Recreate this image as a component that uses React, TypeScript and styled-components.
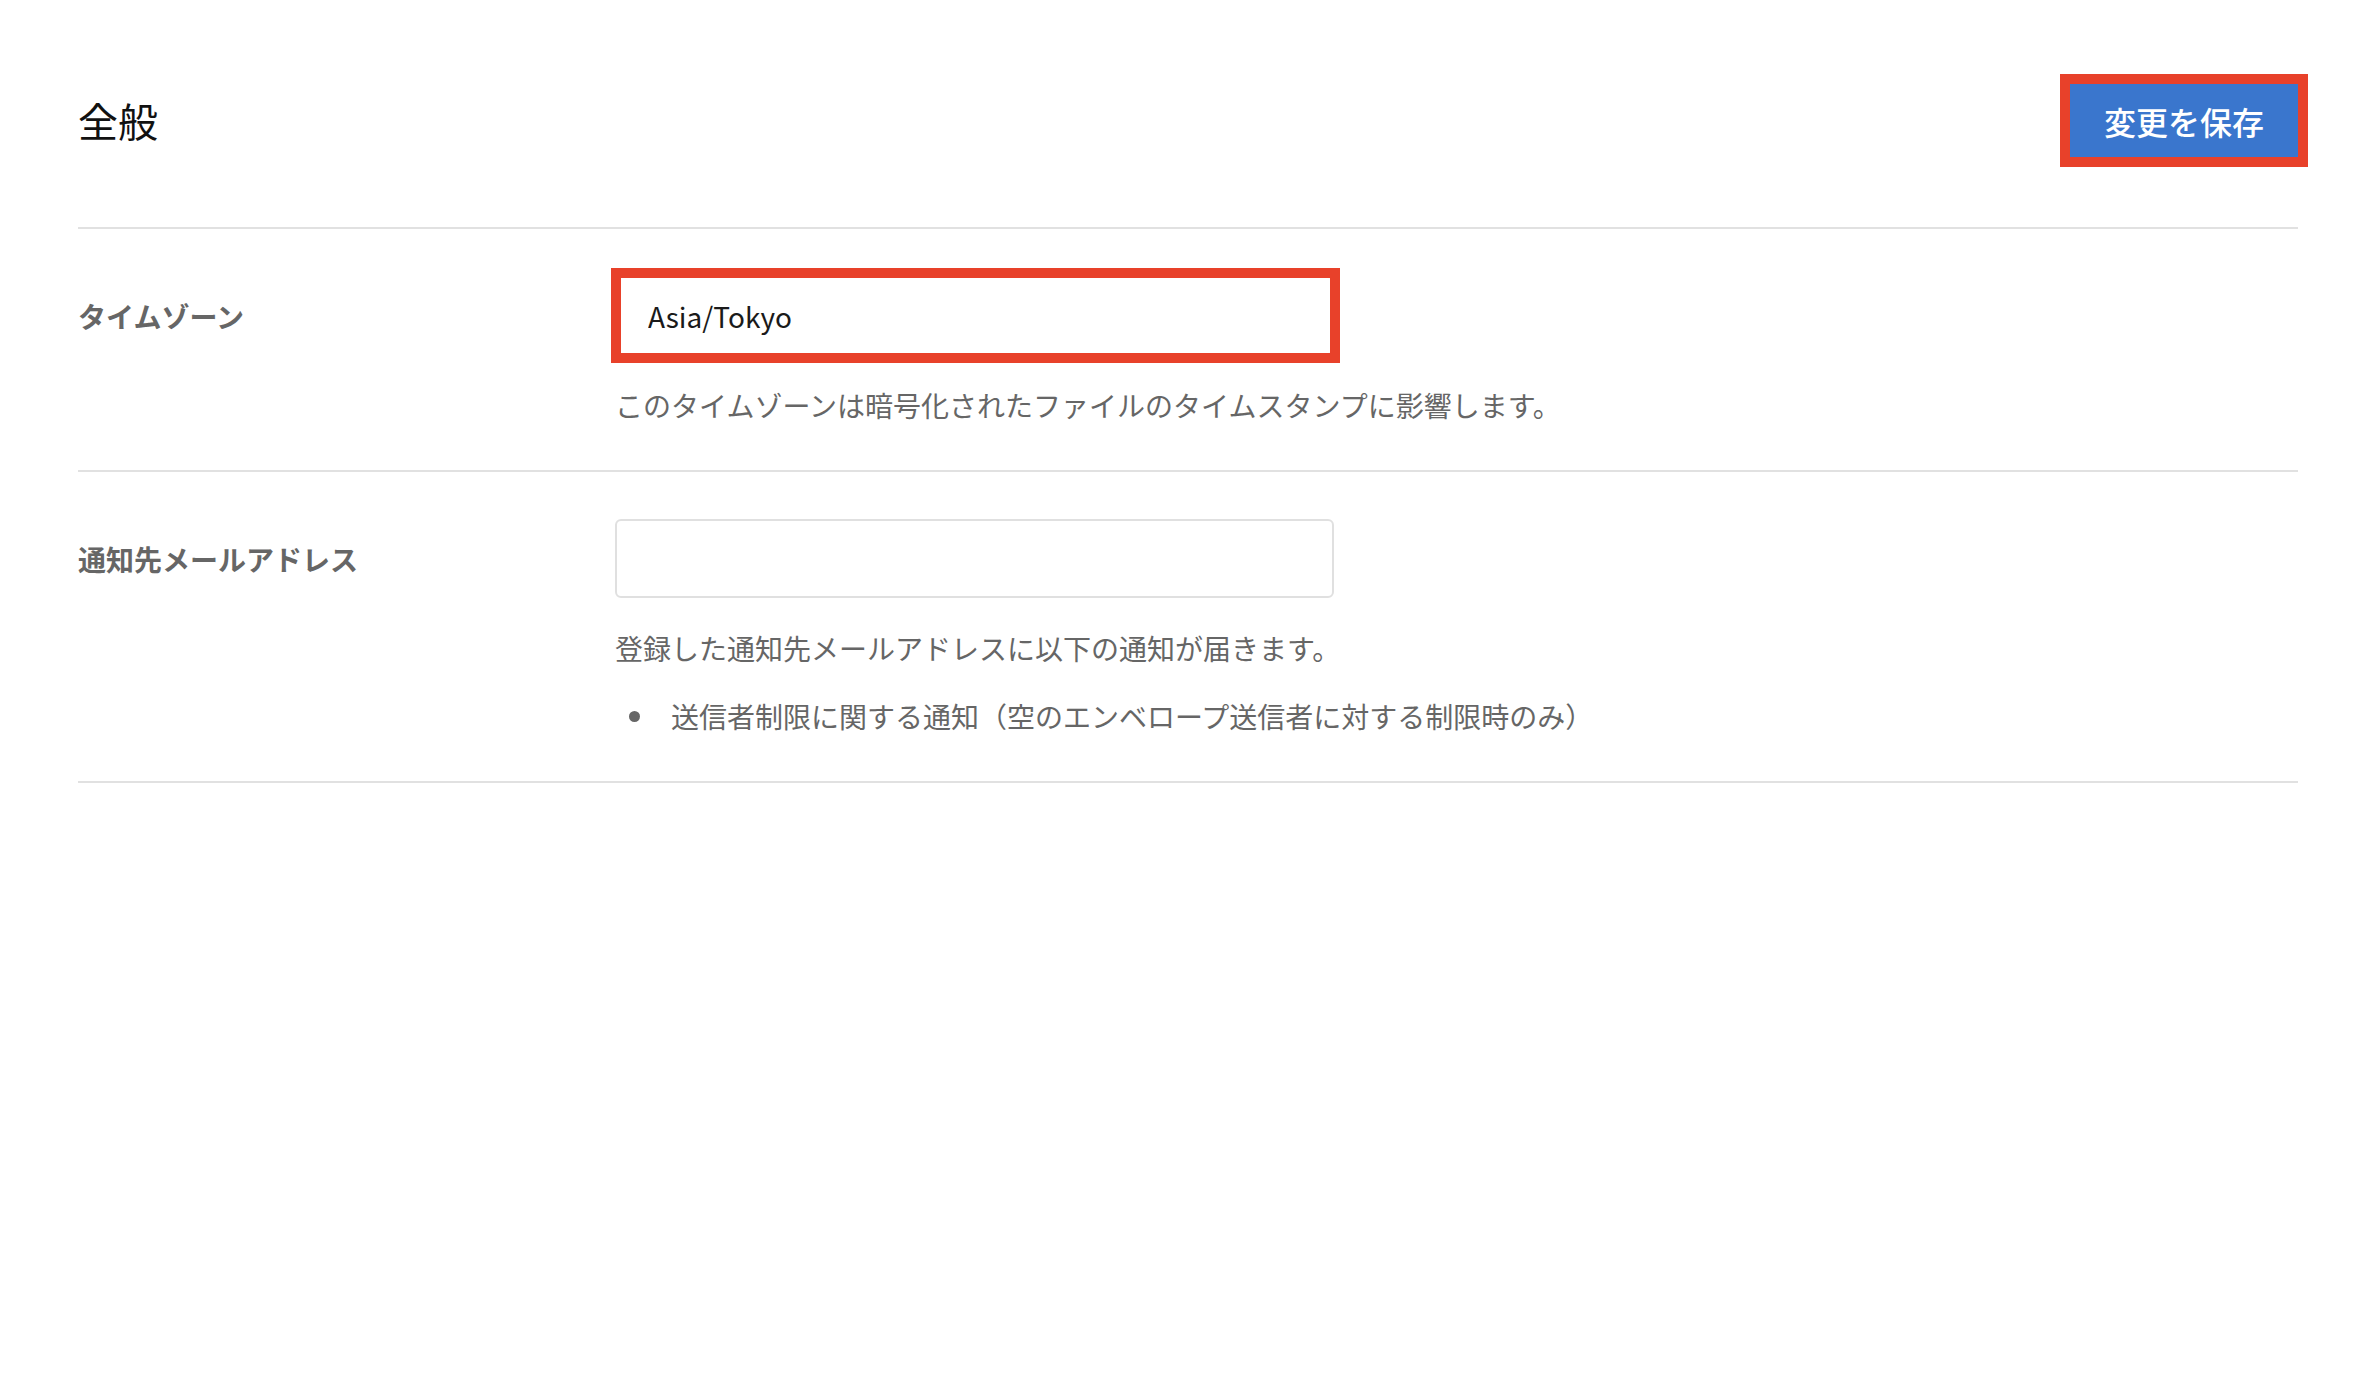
import React from "react";
import styled, { createGlobalStyle } from "styled-components";

const GlobalStyle = createGlobalStyle`
  html, body {
    margin: 0;
    padding: 0;
    background: #ffffff;
  }
  body {
    font-family: "Noto Sans CJK JP", "Noto Sans", sans-serif;
    color: #222222;
  }
  * { box-sizing: border-box; }
`;

const Page = styled.div`
  padding: 0 80px 0 78px;
  width: 2378px;
`;

const Header = styled.header`
  display: flex;
  align-items: center;
  justify-content: space-between;
  padding-top: 84px;
  padding-bottom: 70px;
  border-bottom: 2px solid #e1e1e1;
`;

const Title = styled.h1`
  margin: 0;
  font-size: 40px;
  font-weight: 400;
  line-height: 73px;
  color: #111111;
`;

const SaveButton = styled.button`
  height: 73px;
  width: 228px;
  border: none;
  background: #3a76cd;
  color: #ffffff;
  font-family: inherit;
  font-size: 32px;
  font-weight: 500;
  padding: 0;
  outline: 10px solid #e8412a;
  outline-offset: 0;
  cursor: pointer;
`;

const Row = styled.section`
  display: grid;
  grid-template-columns: 537px 1fr;
  padding: 47px 0 44px;
  border-bottom: 2px solid #e1e1e1;
`;

const Label = styled.div`
  font-size: 28px;
  font-weight: 700;
  color: #666666;
  height: 79px;
  display: flex;
  align-items: center;
`;

const Field = styled.div`
  display: flex;
  flex-direction: column;
`;

const InputWrap = styled.div<{ $highlight?: boolean }>`
  position: relative;
  width: 719px;
  ${(p) =>
    p.$highlight
      ? `
  &::after {
    content: "";
    position: absolute;
    top: -8px;
    bottom: -8px;
    left: -4px;
    right: -6px;
    border: 10px solid #e8412a;
    pointer-events: none;
  }`
      : ""}
`;

const TextInput = styled.input`
  display: block;
  width: 719px;
  height: 79px;
  border: 2px solid #e0e0e0;
  border-radius: 6px;
  padding: 0 31px;
  font-family: inherit;
  font-size: 28px;
  color: #1a1a1a;
  background: #ffffff;
  outline: none;
`;

const Help = styled.p`
  margin: 29px 0 0;
  font-size: 28px;
  line-height: 42px;
  color: #666666;
`;

const List = styled.ul`
  list-style: none;
  margin: 26px 0 0;
  padding: 0;
`;

const Item = styled.li`
  position: relative;
  padding-left: 56px;
  font-size: 28px;
  line-height: 42px;
  color: #666666;

  &::before {
    content: "";
    position: absolute;
    left: 14px;
    top: 16px;
    width: 11px;
    height: 11px;
    border-radius: 50%;
    background: #666666;
  }
`;

export default function App() {
  return (
    <>
      <GlobalStyle />
      <Page>
        <Header>
          <Title>全般</Title>
          <SaveButton>変更を保存</SaveButton>
        </Header>
        <Row>
          <Label>タイムゾーン</Label>
          <Field>
            <InputWrap $highlight>
              <TextInput defaultValue="Asia/Tokyo" />
            </InputWrap>
            <Help>
              このタイムゾーンは暗号化されたファイルのタイムスタンプに影響します。
            </Help>
          </Field>
        </Row>
        <Row>
          <Label>通知先メールアドレス</Label>
          <Field>
            <InputWrap>
              <TextInput defaultValue="" />
            </InputWrap>
            <Help>登録した通知先メールアドレスに以下の通知が届きます。</Help>
            <List>
              <Item>
                送信者制限に関する通知（空のエンベロープ送信者に対する制限時のみ）
              </Item>
            </List>
          </Field>
        </Row>
      </Page>
    </>
  );
}
